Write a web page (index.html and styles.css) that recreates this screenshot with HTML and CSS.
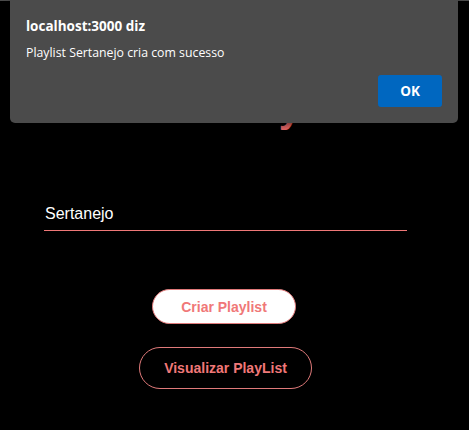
FILE: index.html
```html
<!DOCTYPE html>
<html lang="pt-BR">
<head>
<meta charset="utf-8">
<title>Playlist</title>
<link rel="stylesheet" href="styles.css">
</head>
<body>
<div class="topline"></div>
<main class="page">
  <h1 class="title">Criar Playlist</h1>
  <input class="field" type="text" value="Sertanejo">
  <div class="actions">
    <button class="btn btn-primary" type="button">Criar Playlist</button>
    <button class="btn btn-outline" type="button">Visualizar PlayList</button>
  </div>
</main>
<div class="alert" role="alertdialog">
  <div class="alert-title">localhost:3000 diz</div>
  <div class="alert-msg">Playlist Sertanejo cria com sucesso</div>
  <div class="alert-foot"><button class="alert-ok" type="button">OK</button></div>
</div>
</body>
</html>
```
FILE: styles.css
```css
html, body {
  margin: 0;
  padding: 0;
  background: #000;
  height: 100%;
  overflow: hidden;
}
body {
  font-family: "Liberation Sans", Arial, sans-serif;
}
.topline {
  height: 1px;
  background: #4b4b4b;
}
.page {
  width: 363px;
  margin-left: 44px;
  display: flex;
  flex-direction: column;
}
.title {
  margin: 83px 0 0 0;
  padding-left: 22px;
  font-size: 40px;
  line-height: 48px;
  font-weight: 700;
  color: #e06464;
  text-align: center;
  white-space: nowrap;
}
.field {
  display: block;
  box-sizing: border-box;
  width: 363px;
  height: 30px;
  margin-top: 69px;
  padding: 0 1px 4px 1px;
  border: none;
  border-bottom: 1px solid #f07878;
  background: transparent;
  color: #fff;
  font-family: "Liberation Sans", Arial, sans-serif;
  font-size: 16px;
  outline: none;
}
.actions {
  display: flex;
  flex-direction: column;
  align-items: center;
  margin-top: 58px;
  padding-right: 3px;
  gap: 23px;
}
.btn {
  box-sizing: border-box;
  font-family: "Liberation Sans", Arial, sans-serif;
  font-size: 14px;
  font-weight: 700;
  color: #f07878;
  border: 1px solid #e07a7a;
  border-radius: 999px;
  padding: 0;
  cursor: pointer;
}
.btn-primary {
  width: 144px;
  height: 35px;
  background: #fff;
}
.btn-outline {
  width: 173px;
  height: 42px;
  background: #000;
  margin-left: 3px;
}
.alert {
  position: absolute;
  top: 0;
  left: 10px;
  width: 448px;
  height: 123px;
  box-sizing: border-box;
  background: #4b4b4b;
  border-radius: 0 0 5px 5px;
  box-shadow: 0 2px 6px rgba(0,0,0,0.5);
  padding: 18px 16px 0 16px;
  font-family: "Open Sans", "Noto Sans", sans-serif;
  color: #fff;
}
.alert-title {
  font-size: 13.5px;
  font-weight: 700;
  line-height: 16px;
}
.alert-msg {
  margin-top: 11px;
  font-size: 12.3px;
  line-height: 16px;
}
.alert-foot {
  display: flex;
  justify-content: flex-end;
  margin-top: 14px;
}
.alert-ok {
  width: 64px;
  height: 32px;
  background: #0067c0;
  color: #fff;
  border: none;
  border-radius: 3px;
  font-family: "Open Sans", "Noto Sans", sans-serif;
  font-size: 13.5px;
  font-weight: 700;
}
```
